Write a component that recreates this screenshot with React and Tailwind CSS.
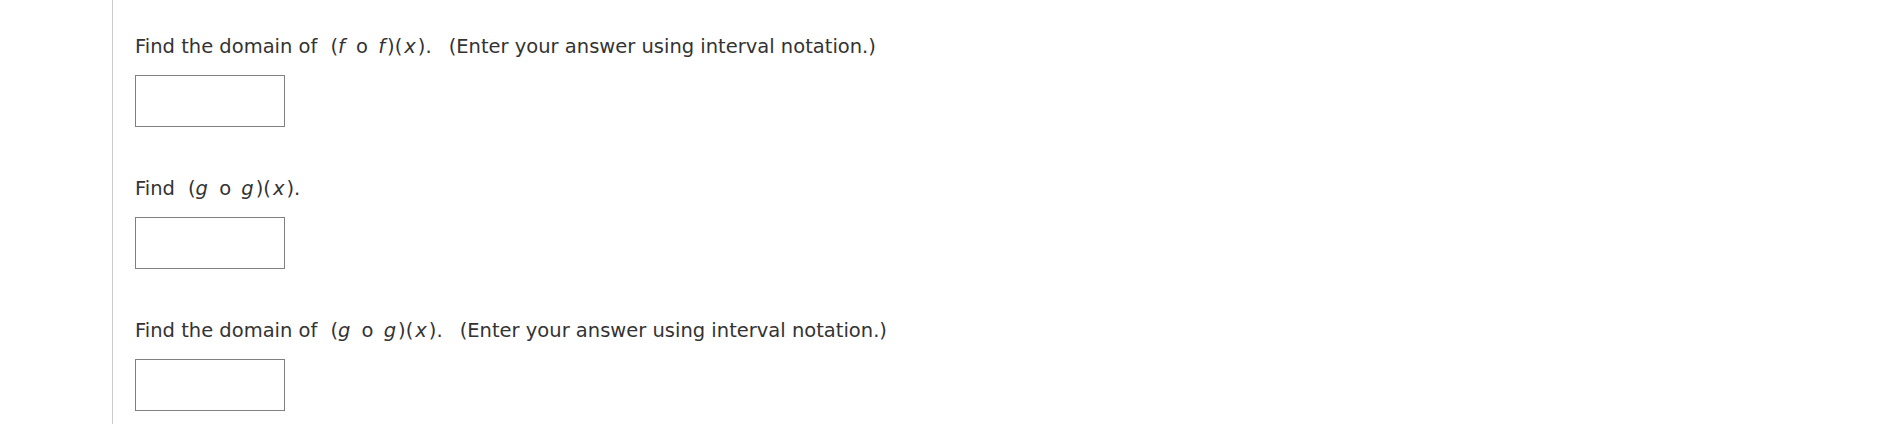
import React from 'react';

const questions = [
  {
    id: 'dom-ff',
    lead: 'Find the domain of',
    fn: 'f',
    tail: '(Enter your answer using interval notation.)',
  },
  { id: 'gg', lead: 'Find', fn: 'g', tail: '' },
  {
    id: 'dom-gg',
    lead: 'Find the domain of',
    fn: 'g',
    tail: '(Enter your answer using interval notation.)',
  },
];

// (f o f)(x) style composition
const Composition = ({ fn }) => (
  <span className="ml-[13px]">
    (<i className="pr-[1px]">{fn}</i>
    <span className="mx-[4px]"> o </span>
    <i className="pr-[2px]">{fn}</i>)(<i className="px-[2px]">x</i>).
  </span>
);

const Question = ({ q }) => (
  <div className="flex flex-col">
    <p className="h-[28px] leading-[28px] whitespace-pre">
      <span>{q.lead}</span>
      <Composition fn={q.fn} />
      {q.tail && <span className="ml-[17px]">{q.tail}</span>}
    </p>
    <input
      type="text"
      className="mt-[14px] h-[52px] w-[150px] border border-[#808080] bg-white outline-none"
    />
  </div>
);

export default function App() {
  return (
    <div
      className="flex h-[424px] w-[1888px] bg-white text-[19.5px] text-[#333333]"
      style={{ fontFamily: '"DejaVu Sans", Verdana, sans-serif' }}
    >
      <div className="w-[112px] shrink-0" />
      <div className="flex flex-col gap-[48px] border-l border-[#cccccc] pl-[22px] pt-[33px]">
        {questions.map((q) => (
          <Question key={q.id} q={q} />
        ))}
      </div>
    </div>
  );
}
